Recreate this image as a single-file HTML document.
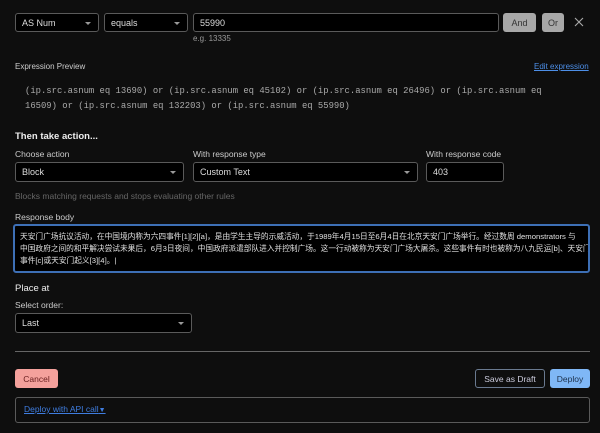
<!DOCTYPE html>
<html><head><meta charset="utf-8"><style>
*{box-sizing:border-box;margin:0;padding:0}
body{width:600px;height:433px;background:#0e0e0e;color:#e6e6e6;font-family:"Liberation Sans","Noto Sans CJK SC",sans-serif;font-size:9px;position:relative;overflow:hidden}
.a{position:absolute}
.box{position:absolute;background:#000;border:1px solid #5a5a5a;border-radius:3px;padding-left:6px;display:flex;align-items:center;color:#ddd;font-size:9px}
.car{position:absolute;right:7px;top:50%;margin-top:-1px;border-left:3px solid transparent;border-right:3px solid transparent;border-top:3px solid #999}
.lbl{position:absolute;font-size:8.5px;color:#ccc}
.btn{position:absolute;border-radius:3px;display:flex;align-items:center;justify-content:center;font-size:8.5px}
</style></head><body>
<div class="box" style="left:15px;top:13px;width:84px;height:19px">AS Num<span class="car"></span></div>
<div class="box" style="left:104px;top:13px;width:84px;height:19px">equals<span class="car"></span></div>
<div class="box" style="left:193px;top:13px;width:306px;height:19px">55990</div>
<div class="btn" style="left:503px;top:13px;width:33px;height:19px;background:#a8a8a8;color:#333;font-size:9px">And</div>
<div class="btn" style="left:542px;top:13px;width:22px;height:19px;background:#a8a8a8;color:#333;font-size:9px">Or</div>
<svg class="a" style="left:574px;top:17px" width="10" height="10" viewBox="0 0 10 10"><path d="M1 1L9 9M9 1L1 9" stroke="#aaa" stroke-width="1.1"/></svg>
<div class="a" style="left:193px;top:34px;font-size:8px;color:#999">e.g. 13335</div>
<div class="a" style="left:15px;top:62px;font-size:8px;color:#ccc">Expression Preview</div>
<div class="a" style="left:534px;top:62px;font-size:8px;color:#4d8fe8;text-decoration:underline">Edit expression</div>
<div class="a" style="left:25px;top:84px;font-family:'Liberation Mono',monospace;font-size:8.9px;line-height:15px;color:#aaa;white-space:pre">(ip.src.asnum eq 13690) or (ip.src.asnum eq 45102) or (ip.src.asnum eq 26496) or (ip.src.asnum eq
16509) or (ip.src.asnum eq 132203) or (ip.src.asnum eq 55990)</div>
<div class="a" style="left:15px;top:131px;font-size:9.5px;font-weight:bold;color:#eee">Then take action...</div>
<div class="lbl" style="left:15px;top:149px">Choose action</div>
<div class="lbl" style="left:193px;top:149px">With response type</div>
<div class="lbl" style="left:426px;top:149px">With response code</div>
<div class="box" style="left:15px;top:162px;width:169px;height:20px">Block<span class="car"></span></div>
<div class="box" style="left:193px;top:162px;width:225px;height:20px">Custom Text<span class="car"></span></div>
<div class="box" style="left:426px;top:162px;width:78px;height:20px">403</div>
<div class="a" style="left:15px;top:191px;font-size:8.5px;color:#666">Blocks matching requests and stops evaluating other rules</div>
<div class="lbl" style="left:15px;top:212px">Response body</div>
<div class="a" style="left:13px;top:224px;width:577px;height:49px;background:#000;border:2px solid #3d6fb5;border-radius:3px;padding:5px 5px;font-size:7.7px;line-height:12px;color:#e0e0e0;white-space:nowrap;overflow:hidden">天安门广场抗议活动，在中国境内称为六四事件[1][2][a]，是由学生主导的示威活动，于1989年4月15日至6月4日在北京天安门广场举行。经过数周 demonstrators 与<br>中国政府之间的和平解决尝试未果后，6月3日夜间，中国政府派遣部队进入并控制广场。这一行动被称为天安门广场大屠杀。这些事件有时也被称为八九民运[b]、天安门<br>事件[c]或天安门起义[3][4]。|</div>
<div class="a" style="left:15px;top:283px;font-size:9.5px;color:#eee">Place at</div>
<div class="lbl" style="left:15px;top:300px">Select order:</div>
<div class="box" style="left:15px;top:313px;width:177px;height:20px">Last<span class="car"></span></div>
<div class="a" style="left:15px;top:351px;width:575px;height:1px;background:#666"></div>
<div class="btn" style="left:15px;top:369px;width:43px;height:19px;background:#f4a19c;color:#6a2020">Cancel</div>
<div class="btn" style="left:475px;top:369px;width:70px;height:19px;border:1px solid #6a7a90;color:#ccd">Save as Draft</div>
<div class="btn" style="left:550px;top:369px;width:40px;height:19px;background:#7fb7f6;color:#1b2f4a">Deploy</div>
<div class="a" style="left:15px;top:397px;width:575px;height:26px;border:1px solid #5a5a5a;border-radius:3px"></div>
<div class="a" style="left:24px;top:404px;font-size:8.5px;color:#3f7de0;text-decoration:underline">Deploy with API call<span style="text-decoration:none;font-size:7px">▼</span></div>
</body></html>
